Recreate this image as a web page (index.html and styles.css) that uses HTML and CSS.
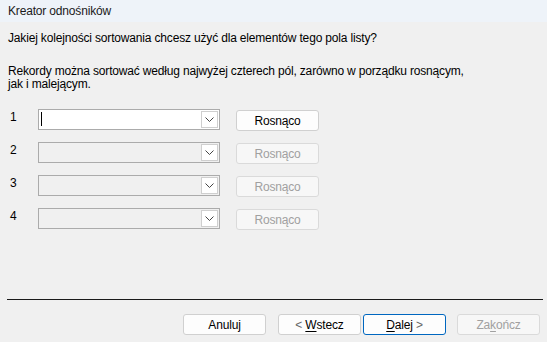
FILE: index.html
```html
<!DOCTYPE html>
<html>
<head>
    <meta charset="utf-8">
    <link rel="stylesheet" href="styles.css">
</head>
<body>
    <div class="window">
        <div class="titlebar">Kreator odnośników</div>

        <div class="content">
            <p class="question">Jakiej kolejności sortowania chcesz użyć dla elementów tego pola listy?</p>
            <p class="hint">Rekordy można sortować według najwyżej czterech pól, zarówno w porządku rosnącym,<br>jak i malejącym.</p>

            <div class="sort-rows">
                <div class="sort-row">
                    <span class="num">1</span>
                    <div class="combo active">
                        <span class="caret"></span>
                        <span class="drop"><svg width="9" height="5" viewBox="0 0 9 5"><path d="M0.5 0.5 L4.5 4.5 L8.5 0.5" fill="none" stroke="#444" stroke-width="1"/></svg></span>
                    </div>
                    <button class="btn order">Rosnąco</button>
                </div>
                <div class="sort-row">
                    <span class="num">2</span>
                    <div class="combo">
                        <span class="drop"><svg width="9" height="5" viewBox="0 0 9 5"><path d="M0.5 0.5 L4.5 4.5 L8.5 0.5" fill="none" stroke="#444" stroke-width="1"/></svg></span>
                    </div>
                    <button class="btn order disabled">Rosnąco</button>
                </div>
                <div class="sort-row">
                    <span class="num">3</span>
                    <div class="combo">
                        <span class="drop"><svg width="9" height="5" viewBox="0 0 9 5"><path d="M0.5 0.5 L4.5 4.5 L8.5 0.5" fill="none" stroke="#444" stroke-width="1"/></svg></span>
                    </div>
                    <button class="btn order disabled">Rosnąco</button>
                </div>
                <div class="sort-row">
                    <span class="num">4</span>
                    <div class="combo">
                        <span class="drop"><svg width="9" height="5" viewBox="0 0 9 5"><path d="M0.5 0.5 L4.5 4.5 L8.5 0.5" fill="none" stroke="#444" stroke-width="1"/></svg></span>
                    </div>
                    <button class="btn order disabled">Rosnąco</button>
                </div>
            </div>
        </div>

        <div class="footer">
            <div class="separator"></div>
            <div class="buttons">
                <button class="btn">Anuluj</button>
                <button class="btn back"><span class="arrow">&lt;</span> <u>W</u>stecz</button>
                <button class="btn default"><u>D</u>alej <span class="arrow">&gt;</span></button>
                <button class="btn disabled">Za<u>k</u>ończ</button>
            </div>
        </div>
    </div>
</body>
</html>
```

FILE: styles.css
```css
/* Wizard dialog */
body {
    margin: 0;
    padding: 0;
    font-family: "Segoe UI", "Liberation Sans", Arial, sans-serif;
    font-size: 12px;
    letter-spacing: -0.17px;
    color: #000;
    background-color: #f0f0f0;
}

.window {
    width: 547px;
    height: 342px;
    display: flex;
    flex-direction: column;
    overflow: hidden;
}

.titlebar {
    height: 22px;
    line-height: 22px;
    padding-left: 8px;
    background-color: #eef3f9;
    color: #1a1a1a;
}

.content {
    flex: 1;
    padding: 0 8px;
}

.question {
    margin: 9px 0 0 0;
    line-height: 15px;
}

.hint {
    margin: 19px 0 0 0;
    line-height: 13px;
}

.sort-rows {
    margin-top: 18px;
    display: flex;
    flex-direction: column;
    gap: 13px;
}

.sort-row {
    display: flex;
    align-items: flex-start;
    height: 20px;
}

.sort-row .num {
    width: 28px;
    padding-left: 2px;
    line-height: 16px;
}

.combo {
    position: relative;
    width: 180px;
    height: 19px;
    border: 1px solid #ababab;
    background-color: #f0f0f0;
}

.combo.active {
    background-color: #fff;
}

.combo .caret {
    position: absolute;
    left: 2px;
    top: 2px;
    width: 1px;
    height: 14px;
    background-color: #000;
}

.combo .drop {
    position: absolute;
    right: 1px;
    top: 1px;
    width: 15px;
    height: 15px;
    border: 1px solid #cfcfcf;
    background-color: #fff;
    display: flex;
    align-items: center;
    justify-content: center;
}

.btn {
    font-family: inherit;
    font-size: 12px;
    letter-spacing: inherit;
    color: #000;
    width: 83px;
    height: 21px;
    padding: 0;
    background-color: #fdfdfd;
    border: 1px solid #d0d0d0;
    border-radius: 3px;
}

.btn.order {
    margin-left: 16px;
    margin-top: 1px;
}

.btn.disabled {
    color: #a0a0a0;
    background-color: #f7f7f7;
    border-color: #dadada;
}

.btn.default {
    border-color: #0067c0;
}

.btn .arrow {
    color: #666;
}

.btn u {
    text-decoration-thickness: 1px;
    text-underline-offset: 2px;
}

.footer {
    height: 43px;
}

.separator {
    height: 1px;
    margin: 0 4px 0 7px;
    background-color: #1a1a1a;
}

.buttons {
    display: flex;
    justify-content: flex-end;
    padding: 14px 7px 0 0;
}

.buttons .btn + .btn {
    margin-left: 12px;
}

.buttons .btn.default {
    margin-left: 2px;
}

.buttons .btn.disabled {
    margin-left: 11px;
}
```
